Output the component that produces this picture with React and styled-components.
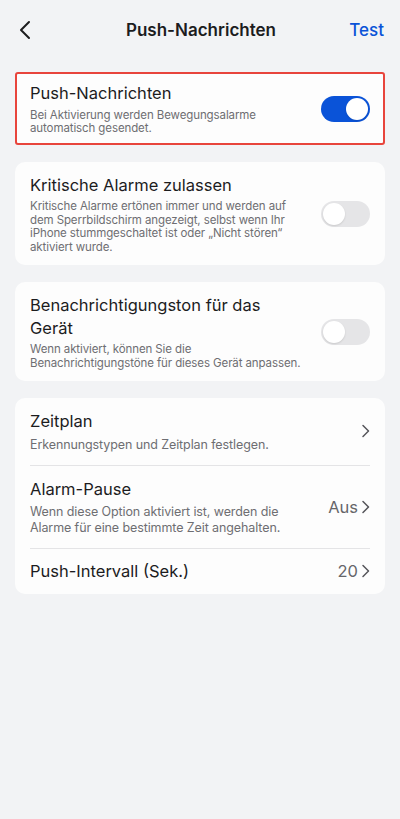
import * as React from "react";
import styled, { createGlobalStyle } from "styled-components";

const GlobalStyle = createGlobalStyle`
  html, body {
    margin: 0;
    padding: 0;
    background: #f2f3f5;
  }
  body {
    font-family: Inter, "Noto Sans", "Liberation Sans", sans-serif;
    color: #1c1c1e;
    -webkit-font-smoothing: antialiased;
  }
`;

const Page = styled.div`
  width: 400px;
  min-height: 819px;
  background: #f2f3f5;
  display: flex;
  flex-direction: column;
`;

const NavBar = styled.header`
  height: 60px;
  display: grid;
  grid-template-columns: 60px 1fr 60px;
  align-items: center;
  padding: 0 16px 0 18px;
  box-sizing: border-box;
`;

const BackButton = styled.button`
  border: none;
  background: none;
  padding: 0;
  width: 20px;
  height: 24px;
  display: flex;
  align-items: center;
  cursor: pointer;
`;

const NavTitle = styled.h1`
  margin: 0;
  text-align: center;
  font-size: 17px;
  font-weight: 600;
  color: #1c1c1e;
`;

const NavAction = styled.button`
  justify-self: end;
  border: none;
  background: none;
  padding: 0;
  font-family: inherit;
  font-size: 17px;
  font-weight: 500;
  color: #0a53d8;
  cursor: pointer;
`;

const Content = styled.main`
  padding: 12px 15px 0 15px;
  display: flex;
  flex-direction: column;
  gap: 17px;
`;

const Card = styled.section`
  background: #fdfdfd;
  box-sizing: border-box;
  border: ${(p) => (p.$highlight ? "2px solid #e8453c" : "none")};
  border-radius: ${(p) => (p.$highlight ? "3px" : "10px")};
  padding: ${(p) => (p.$highlight ? "0 13px" : "0 15px")};
`;

const Row = styled.div`
  display: flex;
  align-items: center;
  justify-content: space-between;
  gap: 10px;
  padding: ${(p) => p.$pad || "12px 0 11px"};
  border-top: ${(p) => (p.$divider ? "1px solid #e4e4e6" : "none")};
`;

const TextCol = styled.div`
  flex: 1;
  min-width: 0;
  max-width: 274px;
  display: flex;
  flex-direction: column;
  gap: 4px;
`;

const Title = styled.div`
  font-size: 16.5px;
  line-height: 22.5px;
  color: #1c1c1e;
`;

const Sub = styled.div`
  font-size: 11.5px;
  letter-spacing: -0.1px;
  line-height: 13.5px;
  color: #6e6e72;
`;

const ListSub = styled(Sub)`
  font-size: 12.5px;
  line-height: 16px;
`;

const Trailing = styled.div`
  display: flex;
  align-items: center;
  gap: 3px;
  font-size: 16.5px;
  color: #66666a;
`;

const Track = styled.span`
  position: relative;
  flex: none;
  width: 49px;
  height: 26px;
  border-radius: 13px;
  background: ${(p) => (p.$on ? "#0a53d8" : "#e5e5e7")};
`;

const Knob = styled.span`
  position: absolute;
  top: 2px;
  left: ${(p) => (p.$on ? "25px" : "2px")};
  width: 22px;
  height: 22px;
  border-radius: 50%;
  background: #ffffff;
  box-shadow: 0 1px 2px rgba(0, 0, 0, 0.12);
`;

function Toggle({ on }) {
  return (
    <Track $on={on}>
      <Knob $on={on} />
    </Track>
  );
}

function Chevron() {
  return (
    <svg width="9" height="14" viewBox="0 0 9 14" fill="none">
      <path d="M2 1.5 L7.5 7 L2 12.5" stroke="#55555a" strokeWidth="1.5" strokeLinecap="round" strokeLinejoin="round" />
    </svg>
  );
}

function BackIcon() {
  return (
    <svg width="14" height="20" viewBox="0 0 14 20" fill="none">
      <path d="M11 2 L3 10 L11 18" stroke="#1c1c1e" strokeWidth="2" strokeLinecap="round" strokeLinejoin="round" />
    </svg>
  );
}

export default function App() {
  return (
    <>
      <GlobalStyle />
      <Page>
        <NavBar>
          <BackButton aria-label="Zurück">
            <BackIcon />
          </BackButton>
          <NavTitle>Push-Nachrichten</NavTitle>
          <NavAction>Test</NavAction>
        </NavBar>

        <Content>
          <Card $highlight>
            <Row $pad="8px 0 7px">
              <TextCol>
                <Title>Push-Nachrichten</Title>
                <Sub>Bei Aktivierung werden Bewegungsalarme automatisch gesendet.</Sub>
              </TextCol>
              <Toggle on />
            </Row>
          </Card>

          <Card>
            <Row>
              <TextCol>
                <Title>Kritische Alarme zulassen</Title>
                <Sub>
                  Kritische Alarme ertönen immer und werden auf dem Sperrbildschirm angezeigt,
                  selbst wenn Ihr iPhone stummgeschaltet ist oder „Nicht stören“ aktiviert wurde.
                </Sub>
              </TextCol>
              <Toggle />
            </Row>
          </Card>

          <Card>
            <Row>
              <TextCol>
                <Title>Benachrichtigungston für das Gerät</Title>
                <Sub>Wenn aktiviert, können Sie die Benachrichtigungstöne für dieses Gerät anpassen.</Sub>
              </TextCol>
              <Toggle />
            </Row>
          </Card>

          <Card>
            <Row $pad="12px 0 12px">
              <TextCol>
                <Title>Zeitplan</Title>
                <ListSub>Erkennungstypen und Zeitplan festlegen.</ListSub>
              </TextCol>
              <Trailing>
                <Chevron />
              </Trailing>
            </Row>
            <Row $divider $pad="12px 0 12px">
              <TextCol>
                <Title>Alarm-Pause</Title>
                <ListSub>
                  Wenn diese Option aktiviert ist, werden die Alarme für eine bestimmte Zeit angehalten.
                </ListSub>
              </TextCol>
              <Trailing>
                Aus
                <Chevron />
              </Trailing>
            </Row>
            <Row $divider $pad="11px 0 11px">
              <TextCol>
                <Title>Push-Intervall (Sek.)</Title>
              </TextCol>
              <Trailing>
                20
                <Chevron />
              </Trailing>
            </Row>
          </Card>
        </Content>
      </Page>
    </>
  );
}
